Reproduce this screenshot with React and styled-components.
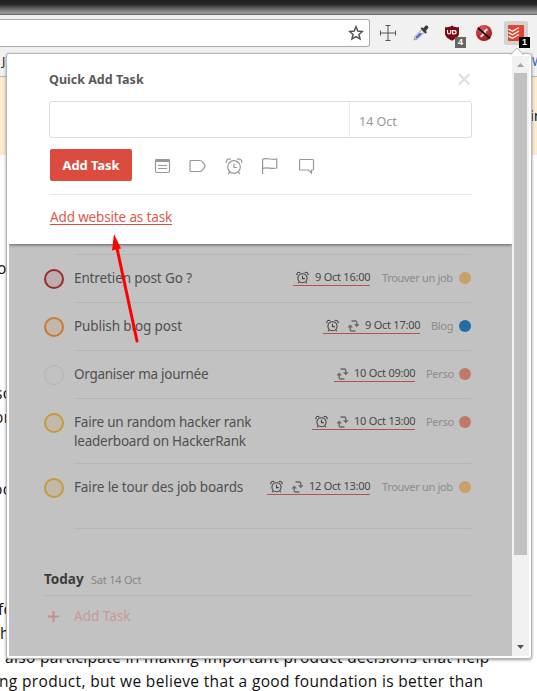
import React from "react";
import styled, { createGlobalStyle } from "styled-components";

const Global = createGlobalStyle`
  * { box-sizing: border-box; }
  html, body { margin: 0; padding: 0; overflow: hidden; }
  body { background: #fff; font-family: "Noto Sans", "Open Sans", sans-serif; }
`;

/* ---------- browser window ---------- */

const Window = styled.div`
  position: relative;
  width: 537px;
  height: 691px;
  overflow: hidden;
  display: flex;
  flex-direction: column;
`;

const TitleStrip = styled.div`
  flex: none;
  height: 15px;
  background: linear-gradient(#1f1f1f 0px, #262626 4px, #8f8f8f 12px, #999 14px);
  border-bottom: 1px solid #6b6b6b;
`;

const Toolbar = styled.div`
  flex: none;
  height: 38px;
  background: #f2f1f2;
  display: flex;
  align-items: flex-start;
  padding-top: 4px;
`;

const AddressBar = styled.div`
  width: 370px;
  height: 28px;
  background: #fff;
  border: 1px solid #a9a9a9;
  border-left: none;
  border-radius: 0 3px 3px 0;
  display: flex;
  align-items: center;
  justify-content: flex-end;
  padding-right: 5px;
`;

const Extensions = styled.div`
  display: flex;
  align-items: center;
  height: 28px;
  margin-left: 6px;
`;

const Extension = styled.div`
  position: relative;
  width: ${(p) => p.$w || 32}px;
  height: 24px;
  margin-left: ${(p) => p.$gap || 0}px;
  border-radius: 2px;
  background: ${(p) => (p.$active ? "#d2d2d2" : "transparent")};
  display: flex;
  align-items: center;
  justify-content: center;
  svg { display: block; }
`;

const Badge = styled.span`
  position: absolute;
  right: ${(p) => p.$right}px;
  bottom: -3px;
  width: 11px;
  height: 11px;
  font: 700 9px/11px "Liberation Sans", sans-serif;
  text-align: center;
  color: #fff;
  background: ${(p) => p.$bg};
`;

const BookmarksBar = styled.div`
  flex: none;
  height: 24px;
  background: #f2f1f2;
  border-bottom: 1px solid #b5b5b5;
  display: flex;
  justify-content: space-between;
  font-size: 12px;
  line-height: 17px;
  overflow: hidden;
`;

const BookmarkText = styled.span`
  color: ${(p) => p.$color};
  margin-left: ${(p) => p.$left || 0}px;
  width: ${(p) => p.$w}px;
  white-space: nowrap;
`;

const Banner = styled.div`
  flex: none;
  height: 78px;
  background: #fdebd0;
  color: #222;
  font-size: 15px;
  line-height: 76px;
  padding-left: 530px;
  white-space: nowrap;
  overflow: hidden;
`;

const Article = styled.div`
  flex: 1;
  padding-top: 101px;
  overflow: hidden;
`;

const Line = styled.div`
  height: 24px;
  margin-top: ${(p) => p.$gap || 0}px;
  margin-left: ${(p) => p.$left || 0}px;
  font: 400 15.5px/24px "Open Sans", "Noto Sans", sans-serif;
  letter-spacing: ${(p) => p.$ls || 0.34}px;
  color: #111;
  white-space: nowrap;
`;

/* ---------- popup ---------- */

const Popup = styled.div`
  position: absolute;
  left: 6px;
  top: 53px;
  width: 526px;
  height: 606px;
  background: #fff;
  border: 1px solid #b4b7b8;
  border-radius: 3px;
  box-shadow: 0 1px 3px rgba(0, 0, 0, 0.4);
  padding: 2px;
  display: flex;
`;

const Caret = styled.svg`
  position: absolute;
  left: 503px;
  top: -7px;
  display: block;
`;

const Content = styled.div`
  width: 503px;
  height: 600px;
  background: #c2c2c2;
  display: flex;
  flex-direction: column;
  overflow: hidden;
`;

const QuickAdd = styled.div`
  position: relative;
  flex: none;
  height: 188px;
  background: #fff;
  padding: 0 40px;
  box-shadow: 0 1px 3px rgba(0, 0, 0, 0.5);
`;

const QuickHeader = styled.div`
  height: 45px;
  display: flex;
  align-items: center;
  justify-content: space-between;
  padding: 1px 1px 0 0;
  color: #5a5a5a;
  font-size: 12.5px;
  font-weight: 700;
`;

const InputBox = styled.div`
  height: 37px;
  border: 1px solid #dcdcdc;
  border-radius: 3px;
  display: flex;
  justify-content: flex-end;
`;

const DateField = styled.div`
  width: 122px;
  border-left: 1px solid #e9e9e9;
  padding-left: 9px;
  font-size: 12.5px;
  line-height: 39px;
  color: #999;
`;

const ActionRow = styled.div`
  height: 57px;
  border-bottom: 1px solid #e8e8e8;
  display: flex;
  align-items: flex-start;
  padding: 11px 0 0 1px;
`;

const Button = styled.div`
  width: 82px;
  height: 32px;
  border-radius: 2px;
  background: #db4c3f;
  color: #fff;
  font-size: 13px;
  font-weight: 700;
  line-height: 32px;
  text-align: center;
  letter-spacing: -0.1px;
`;

const ToolIcons = styled.div`
  display: flex;
  margin: 5px 0 0 20px;
  gap: 12px;
  svg { display: block; }
`;

const WebsiteLink = styled.a`
  display: block;
  width: 122px;
  margin: 12px 0 0 1px;
  height: 18px;
  font-size: 13.5px;
  line-height: 21px;
  letter-spacing: -0.15px;
  color: #dd5a4e;
  border-bottom: 1px solid #db4c3f;
  white-space: nowrap;
`;

const TaskList = styled.div`
  padding: 10px 41px 0 35px;
`;

const ListTop = styled.div`
  margin-left: 30px;
  border-top: 1px solid #b6b6b6;
`;

const Task = styled.div`
  display: flex;
  height: ${(p) => p.$h}px;
`;

const Check = styled.div`
  flex: none;
  width: 20px;
  height: 20px;
  margin: 14px 10px 0 0;
  border-radius: 50%;
  border: ${(p) => (p.$plain ? 1 : 2)}px solid ${(p) => p.$color};
  background: ${(p) => p.$fill};
`;

const TaskBody = styled.div`
  flex: 1;
  display: flex;
  border-bottom: 1px solid #b6b6b6;
  padding-top: 13px;
`;

const TaskTitle = styled.div`
  flex: 1;
  padding-top: 1px;
  font-size: 13.5px;
  line-height: 19px;
  letter-spacing: ${(p) => p.$ls}px;
  color: #505050;
  white-space: pre;
`;

const Due = styled.div`
  height: 18px;
  display: flex;
  align-items: center;
  border-bottom: 1px solid #b5524b;
  color: #484848;
  font-size: 11px;
  letter-spacing: -0.25px;
  line-height: 15px;
  padding-left: 3px;
  white-space: nowrap;
  svg { display: block; margin-top: 2px; }
`;

const DueText = styled.span`
  width: ${(p) => p.$w}px;
  margin-left: ${(p) => p.$gap}px;
`;

const RepeatSlot = styled.span`
  margin-left: ${(p) => (p.$first ? -1 : 8)}px;
`;

const Project = styled.span`
  width: ${(p) => p.$w}px;
  margin-left: ${(p) => p.$gap}px;
  font-size: 11px;
  line-height: 19px;
  letter-spacing: -0.32px;
  color: #8b8b8b;
  white-space: nowrap;
`;

const Dot = styled.span`
  width: 12px;
  height: 12px;
  margin: 4px 0 0 6px;
  border-radius: 50%;
  background: ${(p) => p.$color};
`;

const DayHeader = styled.div`
  margin-top: 40px;
  height: 27px;
  border-bottom: 1px solid #b6b6b6;
  display: flex;
  align-items: baseline;
  gap: 7px;
  line-height: 20px;
`;

const DayName = styled.span`
  width: 40px;
  font-size: 13.5px;
  font-weight: 700;
  color: #3c3c3c;
`;

const DayDate = styled.span`
  font-size: 11px;
  letter-spacing: -0.22px;
  color: #868686;
`;

const AddRow = styled.div`
  height: 40px;
  display: flex;
  align-items: center;
  padding-left: 4px;
  gap: 15px;
  color: #c69a96;
  font-size: 13.5px;
`;

const Scrollbar = styled.div`
  width: 17px;
  height: 600px;
  background: #f1f1f1;
  display: flex;
  flex-direction: column;
  align-items: center;
  justify-content: space-between;
  svg { display: block; }
`;

const Thumb = styled.div`
  width: 13px;
  height: 482px;
  background: #c1c1c1;
  margin-bottom: 84px;
`;

const Pointer = styled.svg`
  position: absolute;
  left: 100px;
  top: 228px;
`;

/* ---------- icons ---------- */

const AlarmIcon = ({ size = 14, color = "#444", sw = 1.5 }) => (
  <svg width={size} height={size} viewBox="0 0 18 18" fill="none" stroke={color} strokeWidth={sw}>
    <circle cx="9" cy="10" r="6.3" />
    <path d="M9 6.5v4h3.2M4.8 14.8 3 17M13.2 14.8 15 17" />
    <path d="M1.600 6C.2 3.600 3.200.6 5.900 2.400M16.400 6c1.400-2.400-1.600-5.400-4.300-3.600" />
  </svg>
);

const RepeatIcon = () => (
  <svg width="13" height="12" viewBox="0 0 13 12">
    <path d="M4.500 1h4a1.300 1.300 0 0 1 1.300 1.300V5M8.500 11h-4a1.300 1.300 0 0 1-1.300-1.300V7" fill="none" stroke="#686868" strokeWidth="1.300" />
    <path d="M7 4.300h5.600L9.800 7.200zM.4 7.500h5.600L3.200 4.600z" fill="#686868" />
  </svg>
);

const StarIcon = () => (
  <svg width="16" height="16" viewBox="0 0 16 16">
    <path d="M8 1.800l1.800 4.300 4.600.4-3.500 3 1.100 4.500L8 11.600 4 14l1.100-4.500-3.500-3 4.600-.4z" fill="none" stroke="#555" strokeWidth="1.500" />
  </svg>
);

const CrossIcon = () => (
  <svg width="16" height="16" viewBox="0 0 16 16">
    <path d="M8 .5v15M.5 8h15M5.500.5h5M5.500 15.500h5M.5 5.500v5M15.500 5.500v5" stroke="#555" fill="none" />
  </svg>
);

const DropperIcon = () => (
  <svg width="16" height="16" viewBox="0 0 16 16">
    <path d="M1 15l1-3.500L9 4.500 11.500 7 4.500 14z" fill="#dfe4ee" stroke="#8b8b8b" strokeWidth=".8" />
    <path d="M2.500 13.500l.6-1.800L7 8l2 .8L4.300 13z" fill="#2e5be0" />
    <path d="M7.500 3.500l1.300-1.300 1.600 1L12.300 1c1.800-1.500 4 .7 2.500 2.500L13 5.700l.8 1.700L12.500 8.700z" fill="#3a3a3a" />
  </svg>
);

const ShieldIcon = () => (
  <svg width="16" height="16" viewBox="0 0 16 16">
    <path d="M8 .5C6 2 4 2.300 1 2.300V8c0 4 3.500 6 7 7.700C11.500 14 15 12 15 8V2.300C12 2.300 10 2 8 .5z" fill="#800610" />
    <path d="M3.500 5v2.300a1.600 1.600 0 0 0 3.200 0V5M8.500 9.300V5.600h2a1.500 1.500 0 0 1 0 3.200h-2" fill="none" stroke="#fff" strokeWidth="1.200" />
  </svg>
);

const FlashBlockIcon = () => (
  <svg width="16" height="16" viewBox="0 0 16 16">
    <defs>
      <radialGradient id="ball" cx=".4" cy=".25" r=".8">
        <stop offset="0" stopColor="#e55a58" />
        <stop offset="1" stopColor="#a30d12" />
      </radialGradient>
    </defs>
    <circle cx="8" cy="8" r="8" fill="url(#ball)" />
    <path d="M11.500 4.500C7.500 4.500 8.500 11 4.500 11.500M6.500 8.500H10" stroke="#fff" strokeWidth="1.800" fill="none" />
    <path d="M2 3l12 10.500" stroke="#111" strokeWidth="2" />
  </svg>
);

const TodoistIcon = () => (
  <svg width="16" height="16" viewBox="0 0 16 16">
    <rect width="16" height="16" rx="1" fill="#e44332" />
    <path d="M.5 4.200 4.500 6.300 11 2.500M.5 7.700 4.500 9.800 11 6M.5 11.200l4 2.100L11 9.500" stroke="#fff" strokeWidth="1.300" fill="none" />
  </svg>
);

const CloseIcon = () => (
  <svg width="13" height="13" viewBox="0 0 13 13">
    <path d="M1 1l10.500 10.500M11.500 1 1 11.500" stroke="#dfdfdf" strokeWidth="2.300" />
  </svg>
);

const line = { fill: "none", stroke: "#999", strokeWidth: 1.2 };

const NoteIcon = () => (
  <svg width="25" height="24" viewBox="0 0 25 24" {...line}>
    <rect x="3.500" y="5.500" width="14" height="13" rx="1.500" />
    <path d="M3.500 6.500h14" strokeWidth="3" />
    <path d="M6 11.500h9M6 14.500h9" />
  </svg>
);

const LabelIcon = () => (
  <svg width="25" height="24" viewBox="0 0 25 24" {...line}>
    <path d="M2 6.500h9.500c1.200 0 4.500 4.300 4.500 5.500s-3.300 5.500-4.500 5.500H2a1 1 0 0 1-1-1v-9a1 1 0 0 1 1-1z" />
  </svg>
);

const FlagIcon = () => (
  <svg width="25" height="24" viewBox="0 0 25 24" {...line}>
    <path d="M.6 20V5.200c5-2 8.500 1.500 14.200-.2v9c-5.700 1.700-9.200-1.500-14.200.5" />
  </svg>
);

const CommentIcon = () => (
  <svg width="20" height="24" viewBox="2 0 20 24" {...line}>
    <path d="M2.500 5.500h12a1 1 0 0 1 1 1v8.500a1 1 0 0 1-1 1h-1v3L10.500 16h-8a1 1 0 0 1-1-1V6.500a1 1 0 0 1 1-1z" transform="translate(1 0)" />
  </svg>
);

const AlarmSlot = styled.div`
  width: 24px;
  padding-top: 3px;
  svg { margin-left: -1px; }
`;

const Triangle = ({ up }) => (
  <svg width="17" height="17" viewBox="0 0 17 17">
    {up ? <path d="M5 11h7L8.500 7z" fill="#a3a3a3" /> : <path d="M5 6h7L8.500 10z" fill="#505050" />}
  </svg>
);

/* ---------- data ---------- */

const tasks = [
  { title: "Entretien post Go ?", ls: -0.12, h: 48, color: "#9d2a2c", fill: "#bcaead", alarm: true, due: "9 Oct 16:00", dw: 55, project: "Trouver un job", pw: 71, gap: 12, dot: "#c9a068" },
  { title: "Publish blog post", ls: -0.1, h: 48, color: "#c87a33", fill: "#c3b6ab", alarm: true, repeat: true, due: "9 Oct 17:00", dw: 55, project: "Blog", pw: 22, gap: 11, dot: "#256ca6" },
  { title: "Organiser ma journée", ls: -0.27, h: 48, color: "#b2b2b2", plain: true, fill: "transparent", repeat: true, due: "10 Oct 09:00", dw: 61, project: "Perso", pw: 27, gap: 11, dot: "#c37768" },
  { title: "Faire un random hacker rank\nleaderboard on HackerRank", ls: -0.22, h: 65, color: "#c39b38", fill: "#c3b9ab", alarm: true, repeat: true, due: "10 Oct 13:00", dw: 61, project: "Perso", pw: 27, gap: 11, dot: "#c37768" },
  { title: "Faire le tour des job boards", ls: -0.14, h: 65, color: "#c39b38", fill: "#c3b9ab", alarm: true, repeat: true, due: "12 Oct 13:00", dw: 61, project: "Trouver un job", pw: 71, gap: 12, dot: "#c9a068" },
];

export default function App() {
  return (
    <>
      <Global />
      <Window>
        <TitleStrip />
        <Toolbar>
          <AddressBar><StarIcon /></AddressBar>
          <Extensions>
            <Extension $w={24}><CrossIcon /></Extension>
            <Extension $w={24} $gap={9}><DropperIcon /></Extension>
            <Extension $w={24} $gap={7}><ShieldIcon /><Badge $right={-2} $bg="#666">4</Badge></Extension>
            <Extension $w={24} $gap={8}><FlashBlockIcon /></Extension>
            <Extension $w={24} $gap={8} $active><TodoistIcon /><Badge $right={-2} $bg="#000">1</Badge></Extension>
          </Extensions>
        </Toolbar>
        <BookmarksBar>
          <BookmarkText $color="#222" $left={2} $w={5}>J</BookmarkText>
          <BookmarkText $color="#2b5f9e" $w={5}>W</BookmarkText>
        </BookmarksBar>
        <Banner>in</Banner>
        <Article>
          <Line $left={-3}>o</Line>
          <Line $gap={101} $left={-5}>so</Line>
          <Line $left={-6}>or</Line>
          <Line $gap={48} $left={-7}>oc</Line>
          <Line $gap={96} $left={-2}>fo</Line>
          <Line>h</Line>
          <Line $left={5}>also participate in making important product decisions that help</Line>
          <Line $left={-1}>ng product, but we believe that a good foundation is better than</Line>
        </Article>

        <Popup>
          <Caret width="14" height="8" viewBox="0 0 14 8">
            <path d="M.5 8 7 1l6.500 7" fill="#fff" stroke="#b4b7b8" />
          </Caret>
          <Content>
            <QuickAdd>
              <QuickHeader>Quick Add Task<CloseIcon /></QuickHeader>
              <InputBox><DateField>14 Oct</DateField></InputBox>
              <ActionRow>
                <Button>Add Task</Button>
                <ToolIcons>
                  <NoteIcon />
                  <LabelIcon />
                  <AlarmSlot><AlarmIcon size={18} color="#999" sw={1.2} /></AlarmSlot>
                  <FlagIcon />
                  <CommentIcon />
                </ToolIcons>
              </ActionRow>
              <WebsiteLink>Add website as task</WebsiteLink>
            </QuickAdd>
            <TaskList>
              <ListTop />
              {tasks.map((t) => (
                <Task key={t.title} $h={t.h}>
                  <Check $color={t.color} $fill={t.fill} $plain={t.plain} />
                  <TaskBody>
                    <TaskTitle $ls={t.ls}>{t.title}</TaskTitle>
                    <Due>
                      {t.alarm && <AlarmIcon size={13} />}
                      {t.repeat && <RepeatSlot $first={!t.alarm}><RepeatIcon /></RepeatSlot>}
                      <DueText $w={t.dw} $gap={t.repeat ? 5 : 6}>{t.due}</DueText>
                    </Due>
                    <Project $w={t.pw} $gap={t.gap}>{t.project}</Project>
                    <Dot $color={t.dot} />
                  </TaskBody>
                </Task>
              ))}
              <DayHeader>
                <DayName>Today</DayName>
                <DayDate>Sat 14 Oct</DayDate>
              </DayHeader>
              <AddRow>
                <svg width="11" height="11" viewBox="0 0 11 11"><path d="M5.500 0v11M0 5.500h11" stroke="#c48f8a" strokeWidth="2" /></svg>
                Add Task
              </AddRow>
            </TaskList>
          </Content>
          <Scrollbar>
            <Triangle up />
            <Thumb />
            <Triangle />
          </Scrollbar>
        </Popup>

        <Pointer width="45" height="120" viewBox="0 0 45 120">
          <path d="M37 113 16.500 18" stroke="#f00" strokeWidth="3" strokeLinecap="round" />
          <path d="M14 6l7 14.500-9 2z" fill="#f00" />
        </Pointer>
      </Window>
    </>
  );
}
